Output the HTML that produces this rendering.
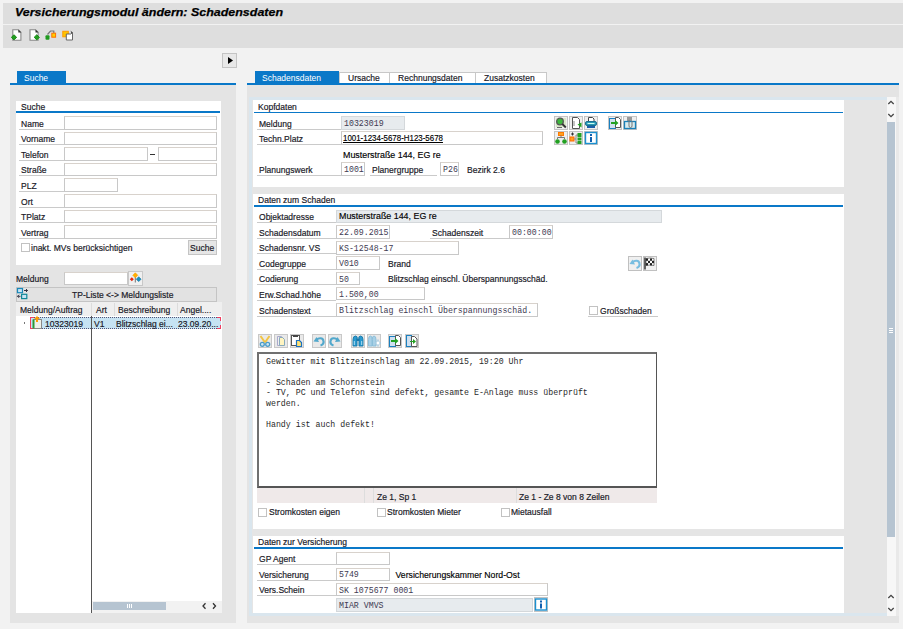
<!DOCTYPE html><html><head><meta charset='utf-8'><style>
*{margin:0;padding:0;box-sizing:border-box}
html,body{width:903px;height:629px;overflow:hidden;background:#f2f2f2;font-family:"Liberation Sans",sans-serif}
body{position:relative}
div{position:absolute}
.t,.t2,.m,.tw,.tt{white-space:nowrap;line-height:12px}
.t{font-size:9.8px;color:#1a1a28;transform:scaleX(.87);transform-origin:0 0;-webkit-text-stroke:0.2px #1a1a28}
.t2{font-size:8.7px;color:#000;-webkit-text-stroke:0.15px #000}
.tw{font-size:9.6px;color:#fff;transform:scaleX(.885);transform-origin:0 0}
.tt{font-size:11.6px;font-weight:bold;font-style:italic;color:#000;transform:scaleX(1.074);transform-origin:0 0;-webkit-text-stroke:0.25px #000}
.m{font-family:"Liberation Mono",monospace;font-size:8.25px;color:#403a52}
.lbl{border-bottom:1px solid #cacaca}
.inp{background:#fff;border:1px solid #c8c8c8;border-top-color:#d8d2cc}
.ro{background:#e7ebee;border-color:#d4d8db}
.cb{width:9px;height:9px;border:1px solid #c2c2c2;background:#fff}
.btn{background:#e6e6e6;border:1px solid #c4c4c4}
.ib{width:14px;height:14px;background:#ececec;border:1px solid #cfcfcf}
</style></head><body><div style="left:3px;top:3px;width:900px;height:21px;background:#dedede"></div>
<div style="left:3px;top:25px;width:900px;height:23px;background:#dedede"></div>
<div class="tt" style="left:15px;top:6px;">Versicherungsmodul ändern: Schadensdaten</div>
<svg style="position:absolute;left:10px;top:28px" width="66" height="14" viewBox="0 0 66 14">
<path d="M2.8 1.7h5.5l2.6 2.6v8h-8.1z" fill="#fff" stroke="#888" stroke-width="1.1"/>
<path d="M8.3 1.5v3h3z" fill="#333"/>
<path d="M4 6.8l2.6 2.5-2.6 2.6-2.6-2.6z" fill="#22a020" stroke="#1a8a18" stroke-width="1"/>
<path d="M20 1.7h5.5l2.6 2.6v8h-8.1z" fill="#fff" stroke="#888" stroke-width="1.1"/>
<path d="M25.5 1.5v3h3z" fill="#333"/>
<path d="M26.8 6.8l2.6 2.5-2.6 2.6-2.6-2.6z" fill="#22a020" stroke="#1a8a18" stroke-width="1"/>
<path d="M37.5 6.5l3-3.5h3.3v2" fill="none" stroke="#777" stroke-width="1.2"/>
<rect x="35.5" y="7.2" width="4" height="4.6" rx="1" fill="#1e9a1e"/>
<rect x="41.8" y="5.2" width="3.8" height="4" fill="#ffd000" stroke="#ff7000" stroke-width="1"/>
<rect x="52.8" y="3.3" width="5.5" height="5.5" fill="#ffc400" stroke="#ff9a00" stroke-width="1"/>
<path d="M56.3 6h4.5l1.7 -1.5v7.5h-6.2z" fill="#fff" stroke="#666" stroke-width="1"/><path d="M60.5 2.5l2 2-1 1z" fill="#333"/>
</svg>
<div style="left:17px;top:71px;width:49px;height:12px;background:#0a78c8"></div>
<div class="tw" style="left:24px;top:72px;">Suche</div>
<div style="left:10px;top:83px;width:226px;height:2px;background:#0a78c8"></div>
<div style="left:10px;top:85px;width:226px;height:538px;background:#e4e4e4"></div>
<div class="btn" style="left:222px;top:53px;width:15px;height:15px;background:#e8e8e8"></div>
<svg style="position:absolute;left:222px;top:53px" width="15" height="15"><path d="M6 4l5 3.5-5 3.5z" fill="#000"/></svg>
<div style="left:16px;top:101px;width:205px;height:164px;background:#fff"></div>
<div class="t" style="left:21px;top:100.5px;">Suche</div>
<div style="left:16px;top:111px;width:204px;height:2px;background:#0a78c8"></div>
<div class="lbl" style="left:19px;top:116.0px;width:45px;height:13.5px"></div>
<div class="t" style="left:21px;top:117.5px;">Name</div>
<div class="inp" style="left:64px;top:116.0px;width:153px;height:13.5px;"></div>
<div class="lbl" style="left:19px;top:131.6px;width:45px;height:13.5px"></div>
<div class="t" style="left:21px;top:133.1px;">Vorname</div>
<div class="inp" style="left:64px;top:131.6px;width:153px;height:13.5px;"></div>
<div class="lbl" style="left:19px;top:147.2px;width:45px;height:13.5px"></div>
<div class="t" style="left:21px;top:148.7px;">Telefon</div>
<div class="inp" style="left:64px;top:147.2px;width:84px;height:13.5px;"></div>
<div class="inp" style="left:158px;top:147.2px;width:59px;height:13.5px;"></div>
<div style="left:150px;top:153.7px;width:5px;height:1px;background:#333"></div>
<div class="lbl" style="left:19px;top:162.8px;width:45px;height:13.5px"></div>
<div class="t" style="left:21px;top:164.3px;">Straße</div>
<div class="inp" style="left:64px;top:162.8px;width:153px;height:13.5px;"></div>
<div class="lbl" style="left:19px;top:178.4px;width:45px;height:13.5px"></div>
<div class="t" style="left:21px;top:179.9px;">PLZ</div>
<div class="inp" style="left:64px;top:178.4px;width:54px;height:13.5px;"></div>
<div class="lbl" style="left:19px;top:194.0px;width:45px;height:13.5px"></div>
<div class="t" style="left:21px;top:195.5px;">Ort</div>
<div class="inp" style="left:64px;top:194.0px;width:153px;height:13.5px;"></div>
<div class="lbl" style="left:19px;top:209.6px;width:45px;height:13.5px"></div>
<div class="t" style="left:21px;top:211.1px;">TPlatz</div>
<div class="inp" style="left:64px;top:209.6px;width:153px;height:13.5px;"></div>
<div class="lbl" style="left:19px;top:225.2px;width:45px;height:13.5px"></div>
<div class="t" style="left:21px;top:226.7px;">Vertrag</div>
<div class="inp" style="left:64px;top:225.2px;width:153px;height:13.5px;"></div>
<div class="cb" style="left:21px;top:243px"></div>
<div class="t" style="left:31px;top:242px;">inakt. MVs berücksichtigen</div>
<div class="btn" style="left:188px;top:240px;width:29px;height:15px"></div>
<div class="t" style="left:190px;top:242px;">Suche</div>
<div class="t" style="left:16px;top:273px;">Meldung</div>
<div class="inp" style="left:64px;top:271.5px;width:64px;height:13.5px;"></div>
<div class="ib" style="left:128px;top:270.5px;width:15px;height:15.5px;background:#f0f0f0;border-color:#c8c8c8"></div>
<svg style="position:absolute;left:128px;top:271px" width="15" height="15">
<path d="M7.3 5v6.5" stroke="#777" stroke-width="1"/>
<path d="M7.3 1.8l2.5 2.5-2.5 2.5-2.5-2.5z" fill="#ffb000" stroke="#ff9a00" stroke-width="0.6"/>
<path d="M3.8 6.3l2 2-2 2-2-2z" fill="#e82a10"/>
<path d="M10.7 5.8l2.4 2.4-2.4 2.4-2.4-2.4z" fill="#1890c0" stroke="#0a70a0" stroke-width="0.6"/>
</svg>
<div class="btn" style="left:16px;top:287px;width:201px;height:15px;background:#e2e2e2"></div>
<svg style="position:absolute;left:16px;top:287px" width="14" height="14">
<rect x="1.5" y="1.5" width="5" height="4.2" fill="#c8e4f4" stroke="#1a88b8" stroke-width="1.2"/>
<rect x="5.6" y="7.3" width="5.2" height="4.3" fill="#c8e4f4" stroke="#108898" stroke-width="1.2"/>
<path d="M8 3.5h3.5M10 2l1.5 1.5L10 5" stroke="#334" fill="none" stroke-width="1"/>
<path d="M4.5 9.3H1.5M3 7.8L1.5 9.3 3 10.8" stroke="#334" fill="none" stroke-width="1"/>
</svg>
<div class="t" style="left:72px;top:289px;">TP-Liste &lt;-&gt; Meldungsliste</div>
<div style="left:16px;top:302px;width:206px;height:311px;background:#fff"></div>
<div style="left:16px;top:302px;width:206px;height:14px;background:#efefef"></div>
<div style="left:91px;top:303px;width:1px;height:13px;background:#dcdcdc"></div>
<div style="left:114px;top:303px;width:1px;height:13px;background:#dcdcdc"></div>
<div style="left:177px;top:303px;width:1px;height:13px;background:#dcdcdc"></div>
<div class="t" style="left:20px;top:303.5px;">Meldung/Auftrag</div>
<div class="t" style="left:96px;top:303.5px;">Art</div>
<div class="t" style="left:118px;top:303.5px;">Beschreibung</div>
<div class="t" style="left:180px;top:303.5px;">Angel....</div>
<div style="left:30px;top:316.5px;width:191px;height:12.5px;background:#c6e3f3;border-top:1px dotted #557;border-bottom:1px dotted #557"></div>
<div style="left:30px;top:316.5px;width:1.2px;height:12.5px;background:#f04060"></div>
<div style="left:30px;top:316.5px;width:4px;height:1.2px;background:#f04060"></div>
<div style="left:30px;top:327.8px;width:4px;height:1.2px;background:#f04060"></div>
<div style="left:220px;top:316.5px;width:1.2px;height:4px;background:#f04060"></div>
<div style="left:220px;top:325px;width:1.2px;height:4px;background:#f04060"></div>
<div style="left:217px;top:316.5px;width:4px;height:1.2px;background:#f04060"></div>
<div style="left:217px;top:327.8px;width:4px;height:1.2px;background:#f04060"></div>
<div style="left:23.5px;top:322px;width:1.5px;height:1.5px;background:#777"></div>
<svg style="position:absolute;left:32px;top:316px" width="11" height="13">
<rect x="1.5" y="3.5" width="8" height="9" fill="#f0f0e8" stroke="#888"/>
<rect x="0.5" y="3.5" width="2" height="9" fill="#2a9a3a"/>
<path d="M5 0l3 3h-2v3h-2v-3h-2z" fill="#ff9a00"/>
</svg>
<div class="t" style="left:45px;top:317.5px;">10323019</div>
<div class="t" style="left:94px;top:317.5px;">V1</div>
<div class="t" style="left:116px;top:317.5px;">Blitzschlag ei...</div>
<div class="t" style="left:178px;top:317.5px;">23.09.20...</div>
<div style="left:91px;top:316px;width:1px;height:297px;background:#555"></div>
<div style="left:92px;top:600.5px;width:130px;height:12px;background:#f2f2f2"></div>
<div style="left:93px;top:602px;width:73px;height:8px;background:#b6c4d1"></div>
<div style="left:127px;top:604px;width:1px;height:4px;background:#fff"></div>
<div style="left:129px;top:604px;width:1px;height:4px;background:#fff"></div>
<div style="left:131px;top:604px;width:1px;height:4px;background:#fff"></div>
<svg style="position:absolute;left:198px;top:600px" width="24" height="12"><path d="M7.5 3.3L5 6l2.5 2.7M15 3.3L17.5 6 15 8.7" fill="none" stroke="#333" stroke-width="1.3"/></svg>
<div style="left:255px;top:71px;width:84px;height:12px;background:#0a78c8"></div>
<div class="tw" style="left:262px;top:72px;">Schadensdaten</div>
<div style="left:339px;top:71.5px;width:208px;height:12px;background:#fff;border:1px solid #c8c8c8;border-bottom:none"></div>
<div style="left:389px;top:72px;width:1px;height:11px;background:#c8c8c8"></div>
<div style="left:475px;top:72px;width:1px;height:11px;background:#c8c8c8"></div>
<div class="t" style="left:348px;top:72px;">Ursache</div>
<div class="t" style="left:398px;top:72px;">Rechnungsdaten</div>
<div class="t" style="left:484px;top:72px;">Zusatzkosten</div>
<div style="left:247px;top:83px;width:652px;height:2px;background:#0a78c8"></div>
<div style="left:247px;top:85px;width:652px;height:538px;background:#e4e4e4"></div>
<div style="left:249px;top:97px;width:638px;height:519px;background:#dae6ee"></div>
<div style="left:252px;top:100px;width:635px;height:512.5px;background:#e5e5e5"></div>
<div style="left:887px;top:97px;width:9px;height:519px;background:#f7f7f7"></div>
<div style="left:896px;top:97px;width:3px;height:519px;background:#e9e9e9"></div>
<div style="left:887px;top:121.7px;width:8px;height:415.5px;background:#b6c4d1"></div>
<div style="left:889px;top:328px;width:4px;height:1px;background:#fff"></div>
<div style="left:889px;top:330px;width:4px;height:1px;background:#fff"></div>
<div style="left:889px;top:332px;width:4px;height:1px;background:#fff"></div>
<svg style="position:absolute;left:886px;top:99px" width="10" height="20"><path d="M2.3 5L5 2.3 7.7 5M2.3 15L5 17.7 7.7 15" fill="none" stroke="#444" stroke-width="1.3"/></svg>
<svg style="position:absolute;left:886px;top:593px" width="10" height="20"><path d="M2.3 5L5 2.3 7.7 5M2.3 15L5 17.7 7.7 15" fill="none" stroke="#444" stroke-width="1.3"/></svg>
<div style="left:252.5px;top:100px;width:591.5px;height:87px;background:#fff"></div>
<div class="t" style="left:258px;top:101px;">Kopfdaten</div>
<div style="left:254px;top:111.5px;width:589px;height:1.5px;background:#0a78c8"></div>
<div class="lbl" style="left:257px;top:116px;width:84px;height:13.5px"></div>
<div class="t" style="left:259px;top:117.5px;">Meldung</div>
<div class="inp ro" style="left:341px;top:116px;width:64px;height:13.5px;"></div>
<div class="m" style="left:344px;top:118.0px;">10323019</div>
<div class="lbl" style="left:257px;top:131px;width:84px;height:14px"></div>
<div class="t" style="left:259px;top:133px;">Techn.Platz</div>
<div class="inp" style="left:341px;top:131px;width:202px;height:14px;"></div>
<div class="t2" style="left:343px;top:132.3px;font-size:9px;transform:scaleX(.88);transform-origin:0 0;text-decoration:underline">1001-1234-5678-H123-5678</div>
<div class="t2" style="left:343px;top:149px;font-size:8.9px">Musterstraße 144, EG re</div>
<div class="lbl" style="left:257px;top:162px;width:84px;height:13.5px"></div>
<div class="t" style="left:259px;top:163.5px;">Planungswerk</div>
<div class="inp" style="left:341px;top:162.3px;width:24px;height:13.5px;"></div>
<div class="m" style="left:344px;top:164.3px;">1001</div>
<div class="lbl" style="left:370px;top:162px;width:67px;height:13.5px"></div>
<div class="t" style="left:372px;top:163.5px;">Planergruppe</div>
<div class="inp" style="left:440px;top:162.3px;width:19px;height:13.5px;"></div>
<div class="m" style="left:443px;top:164.3px;">P26</div>
<div class="t" style="left:467px;top:164px;">Bezirk 2.6</div>
<div style="left:554px;top:116px;width:14px;height:14px;background:#efefef;border:1px solid #c4c4c4"></div>
<svg style="position:absolute;left:554px;top:116px" width="14" height="14" viewBox="0 0 14 14"><rect x="2" y="2" width="10" height="9" fill="#d8e8c8"/><circle cx="6" cy="5.5" r="3.3" fill="#3cb83c" stroke="#555" stroke-width="1.3"/><path d="M8.3 8l3.5 3.5" stroke="#333" stroke-width="1.8"/><path d="M3 11.5h5" stroke="#666"/></svg>
<div style="left:569px;top:116px;width:14px;height:14px;background:#efefef;border:1px solid #c4c4c4"></div>
<svg style="position:absolute;left:569px;top:116px" width="14" height="14" viewBox="0 0 14 14"><path d="M3.5 1.5h5l2 2v9h-7z" fill="#fff" stroke="#555"/><path d="M5 5v5" stroke="#888"/><path d="M8.5 8.5l4-2v5z" fill="#22a022"/></svg>
<div style="left:583.5px;top:116px;width:14px;height:14px;background:#efefef;border:1px solid #c4c4c4"></div>
<svg style="position:absolute;left:583.5px;top:116px" width="14" height="14" viewBox="0 0 14 14"><path d="M4.5 1.5h4l1.5 1.5v3h-5.5z" fill="#fff" stroke="#444"/><rect x="1.5" y="5.5" width="11" height="4" rx="1.5" fill="#2a9ab8" stroke="#1a7090"/><path d="M3.5 7.5h7" stroke="#cfe" stroke-width="1"/><rect x="3" y="10" width="8" height="2" fill="#1a60a8"/></svg>
<div style="left:608px;top:116px;width:14px;height:14px;background:#efefef;border:1px solid #c4c4c4"></div>
<svg style="position:absolute;left:608px;top:116px" width="14" height="14" viewBox="0 0 14 14"><rect x="1.5" y="2.5" width="6" height="10" fill="#cfe0f0" stroke="#1a80c0"/><path d="M7.5 1.5h3l2 2v8h-5z" fill="#fff" stroke="#555"/><path d="M3 6h4v-2l3.5 3-3.5 3v-2h-4z" fill="#22a022"/></svg>
<div style="left:622.5px;top:116px;width:14px;height:14px;background:#efefef;border:1px solid #c4c4c4"></div>
<svg style="position:absolute;left:622.5px;top:116px" width="14" height="14" viewBox="0 0 14 14"><rect x="4" y="1" width="5" height="5" fill="#999"/><rect x="1.5" y="5.5" width="11" height="7" fill="#d8ecf0" stroke="#1a80b8" stroke-width="1.3"/><path d="M6 4v6a1.5 1.5 0 0 0 3 0v-5" fill="none" stroke="#777"/></svg>
<div style="left:554px;top:131px;width:14px;height:14px;background:#efefef;border:1px solid #c4c4c4"></div>
<svg style="position:absolute;left:554px;top:131px" width="14" height="14" viewBox="0 0 14 14"><rect x="4.5" y="1.5" width="5" height="3" fill="#ffa020" stroke="#ff7a00"/><path d="M7 4.5v2M3.5 8v-1.5h7v1.5" stroke="#777" fill="none"/><circle cx="3.5" cy="10.5" r="2.3" fill="#22a022"/><circle cx="10.5" cy="10.5" r="2.3" fill="#22a022"/></svg>
<div style="left:569px;top:131px;width:14px;height:14px;background:#efefef;border:1px solid #c4c4c4"></div>
<svg style="position:absolute;left:569px;top:131px" width="14" height="14" viewBox="0 0 14 14"><path d="M2 3h3M3.5 1.5v3" stroke="#333"/><rect x="1" y="6" width="4" height="4" fill="#ffa020" stroke="#ff6a00"/><path d="M5 8h2M7 4v8M7 4h2M7 12h2" stroke="#888" fill="none"/><rect x="8.5" y="2" width="4" height="4" fill="#22a022"/><rect x="8.5" y="6.5" width="4" height="3" fill="#22a022"/><rect x="8.5" y="10" width="4" height="3" fill="#22a022"/></svg>
<div style="left:583.5px;top:131px;width:14px;height:14px;background:#efefef;border:1px solid #c4c4c4"></div>
<svg style="position:absolute;left:583.5px;top:131px" width="14" height="14" viewBox="0 0 14 14"><rect x="1.5" y="1.5" width="11" height="11" fill="#fff" stroke="#1a90d0" stroke-width="1.4"/><rect x="6" y="3" width="2" height="2" fill="#1060b0"/><rect x="6" y="6" width="2" height="5" fill="#1060b0"/></svg>
<div style="left:253px;top:193.5px;width:591px;height:335.5px;background:#fff"></div>
<div class="t" style="left:258px;top:193.5px;">Daten zum Schaden</div>
<div style="left:254px;top:205px;width:589px;height:1.5px;background:#0a78c8"></div>
<div class="lbl" style="left:257px;top:209.5px;width:79px;height:13.5px"></div>
<div class="t" style="left:259px;top:211.0px;">Objektadresse</div>
<div class="inp ro" style="left:336px;top:209.5px;width:326px;height:13px;"></div>
<div class="t2" style="left:339px;top:210px;font-size:8.9px">Musterstraße 144, EG re</div>
<div class="lbl" style="left:257px;top:225px;width:79px;height:13.5px"></div>
<div class="t" style="left:259px;top:226.5px;">Schadensdatum</div>
<div class="inp" style="left:336px;top:225px;width:54px;height:13.8px;"></div>
<div class="m" style="left:339px;top:227.3px;">22.09.2015</div>
<div class="lbl" style="left:430px;top:225px;width:79px;height:13.5px"></div>
<div class="t" style="left:432px;top:226.5px;">Schadenszeit</div>
<div class="inp" style="left:509px;top:225px;width:44px;height:13.5px;"></div>
<div class="m" style="left:512px;top:227.0px;">00:00:00</div>
<div class="lbl" style="left:257px;top:240.5px;width:79px;height:13.5px"></div>
<div class="t" style="left:259px;top:242.0px;">Schadensnr. VS</div>
<div class="inp" style="left:336px;top:240.5px;width:123px;height:14px;"></div>
<div class="m" style="left:339px;top:243.0px;">KS-12548-17</div>
<div class="lbl" style="left:257px;top:256px;width:79px;height:13.5px"></div>
<div class="t" style="left:259px;top:257.5px;">Codegruppe</div>
<div class="inp" style="left:336px;top:256px;width:44px;height:13.5px;"></div>
<div class="m" style="left:339px;top:258.0px;">V010</div>
<div class="t" style="left:388px;top:257.5px;">Brand</div>
<div style="left:628px;top:255.5px;width:14px;height:15px;background:#f0f0f0;border:1px solid #c0c0c0"></div>
<svg style="position:absolute;left:628px;top:255.5px" width="14" height="15" viewBox="0 0 14 14"><path d="M4.5 6C6.5 3.5 11 3.5 11.5 7C12 9.5 10 11 8.5 11.5" stroke="#78bde0" stroke-width="2.2" fill="none"/><path d="M1.5 7.5L4.5 3 7 8z" fill="#78bde0"/></svg>
<div style="left:643px;top:255.5px;width:14px;height:15px;background:#f0f0f0;border:1px solid #c0c0c0"></div>
<svg style="position:absolute;left:643px;top:255.5px" width="14" height="15" viewBox="0 0 14 14"><path d="M2 1v12" stroke="#333" stroke-width="1.5"/><path d="M3 2q4-1 8 0v7q-4 -1 -8 0z" fill="#fff" stroke="#333" stroke-width="0.6"/><rect x="3" y="2" width="2" height="2.3" fill="#222"/><rect x="7" y="2" width="2" height="2.3" fill="#222"/><rect x="5" y="4.3" width="2" height="2.3" fill="#222"/><rect x="9" y="4.3" width="2" height="2.3" fill="#222"/><rect x="3" y="6.6" width="2" height="2.3" fill="#222"/><rect x="7" y="6.6" width="2" height="2.3" fill="#222"/></svg>
<div class="lbl" style="left:257px;top:271.5px;width:79px;height:13.5px"></div>
<div class="t" style="left:259px;top:273.0px;">Codierung</div>
<div class="inp" style="left:336px;top:271.7px;width:24px;height:13.5px;"></div>
<div class="m" style="left:339px;top:273.7px;">50</div>
<div class="t" style="left:388px;top:273px;">Blitzschlag einschl. Überspannungsschäd.</div>
<div class="lbl" style="left:257px;top:287px;width:79px;height:13.5px"></div>
<div class="t" style="left:259px;top:288.5px;">Erw.Schad.höhe</div>
<div class="inp" style="left:336px;top:287.3px;width:89px;height:13.2px;"></div>
<div class="m" style="left:339px;top:289.0px;">1.500,00</div>
<div class="lbl" style="left:257px;top:302.5px;width:79px;height:14px"></div>
<div class="t" style="left:259px;top:304.5px;">Schadenstext</div>
<div class="inp" style="left:336px;top:302.6px;width:202px;height:14px;"></div>
<div class="m" style="left:339px;top:305.1px;">Blitzschlag einschl Überspannungsschäd.</div>
<div class="cb" style="left:589px;top:305.5px"></div>
<div class="t" style="left:600px;top:304.5px;">Großschaden</div>
<div style="left:588px;top:315.5px;width:70px;height:1px;background:#cacaca"></div>
<div style="left:258px;top:334px;width:14px;height:14px;background:#e9e9e9;border:1px solid #c8c8c8"></div>
<svg style="position:absolute;left:258px;top:334px" width="14" height="14" viewBox="0 0 14 14"><path d="M2.5 2l4.5 6.5M11.5 2l-4.5 6.5" stroke="#f2c444" stroke-width="2"/><circle cx="4.3" cy="10.3" r="2" fill="#cfe6f0" stroke="#4a9cc8" stroke-width="1.3"/><circle cx="9.7" cy="10.3" r="2" fill="#cfe6f0" stroke="#4a9cc8" stroke-width="1.3"/></svg>
<div style="left:274.3px;top:334px;width:14px;height:14px;background:#e9e9e9;border:1px solid #c8c8c8"></div>
<svg style="position:absolute;left:274.3px;top:334px" width="14" height="14" viewBox="0 0 14 14"><path d="M3.5 2.5h4l2 2v7h-6z" fill="#f0f0f0" stroke="#aac"/><path d="M5.5 3.5h3l2 2v6h-5z" fill="#fff4c0" stroke="#8ab"/></svg>
<div style="left:290.4px;top:334px;width:14px;height:14px;background:#e9e9e9;border:1px solid #c8c8c8"></div>
<svg style="position:absolute;left:290.4px;top:334px" width="14" height="14" viewBox="0 0 14 14"><rect x="1.5" y="1.5" width="8" height="10" fill="#fff" stroke="#555"/><rect x="3" y="1" width="5" height="2" fill="#444"/><path d="M6.5 6.5h3l2 2v4h-5z" fill="#ffe070" stroke="#1a70c0" stroke-width="1.2"/></svg>
<div style="left:312.3px;top:334px;width:14px;height:14px;background:#e9e9e9;border:1px solid #c8c8c8"></div>
<svg style="position:absolute;left:312.3px;top:334px" width="14" height="14" viewBox="0 0 14 14"><path d="M4.5 6C6.5 3.5 11 3.5 11.5 7C12 9.5 10 11 8.5 11.5" stroke="#52a8cc" stroke-width="2.2" fill="none"/><path d="M1.5 7.5L4.5 3 7 8z" fill="#52a8cc"/></svg>
<div style="left:328.3px;top:334px;width:14px;height:14px;background:#e9e9e9;border:1px solid #c8c8c8"></div>
<svg style="position:absolute;left:328.3px;top:334px" width="14" height="14" viewBox="0 0 14 14"><path d="M9.5 6C7.5 3.5 3 3.5 2.5 7C2 9.5 4 11 5.5 11.5" stroke="#52a8cc" stroke-width="2.2" fill="none"/><path d="M12.5 7.5L9.5 3 7 8z" fill="#52a8cc"/></svg>
<div style="left:350.7px;top:334px;width:14px;height:14px;background:#e9e9e9;border:1px solid #c8c8c8"></div>
<svg style="position:absolute;left:350.7px;top:334px" width="14" height="14" viewBox="0 0 14 14"><path d="M2 12V5.5Q2 2 4.5 2T6 5.5V12z" fill="#2a9ad0" stroke="#1a78a8" stroke-width="0.9"/><path d="M12 12V5.5Q12 2 9.5 2T8 5.5V12z" fill="#2a9ad0" stroke="#1a78a8" stroke-width="0.9"/><rect x="5.5" y="4.5" width="3" height="2.5" fill="#1a78a8"/><path d="M3.3 7v4M10.7 7v4" stroke="#bfe4f4" stroke-width="0.9"/></svg>
<div style="left:367px;top:334px;width:14px;height:14px;background:#e9e9e9;border:1px solid #c8c8c8"></div>
<svg style="position:absolute;left:367px;top:334px" width="14" height="14" viewBox="0 0 14 14"><path d="M1.5 12V5.5Q1.5 2 3.5 2T5 5.5V12z" fill="#a8d0e6" stroke="#88bcd8" stroke-width="0.9"/><path d="M9 12V5.5Q9 2 7 2T5.5 5.5V12z" fill="#a8d0e6" stroke="#88bcd8" stroke-width="0.9"/><path d="M11 5.5l1 2.5 2 1-2 1-1 2.5-1-2.5-2-1 2-1z" fill="#fff" stroke="#9cc4dc" stroke-width="0.7"/></svg>
<div style="left:388.3px;top:334px;width:14px;height:14px;background:#e9e9e9;border:1px solid #c8c8c8"></div>
<svg style="position:absolute;left:388.3px;top:334px" width="14" height="14" viewBox="0 0 14 14"><rect x="1.5" y="2.5" width="6" height="10" fill="#cfe0f0" stroke="#1a80c0"/><path d="M7.5 1.5h3l2 2v8h-5z" fill="#fff" stroke="#555"/><path d="M3 6h4v-2l3.5 3-3.5 3v-2h-4z" fill="#22a022"/></svg>
<div style="left:405.2px;top:334px;width:14px;height:14px;background:#e9e9e9;border:1px solid #c8c8c8"></div>
<svg style="position:absolute;left:405.2px;top:334px" width="14" height="14" viewBox="0 0 14 14"><rect x="1.5" y="1.5" width="5" height="11" fill="#cfe0f0" stroke="#1a80c0"/><path d="M6.5 2.5h3l2.5 2.5v7.5h-5.5z" fill="#fff" stroke="#555"/><path d="M5 7h3v-2l3 2.5-3 2.5v-2h-3z" fill="#22a022"/></svg>
<div style="left:257px;top:352px;width:400px;height:135.5px;background:#fff;border:2px solid #707070;border-right:1.5px solid #555;border-bottom:2px solid #555"></div>
<div class="m" style="left:266px;top:355.5px;color:#2a2a2a">Gewitter mit Blitzeinschlag am 22.09.2015, 19:20 Uhr</div>
<div class="m" style="left:266px;top:376.76px;color:#2a2a2a">- Schaden am Schornstein</div>
<div class="m" style="left:266px;top:387.39px;color:#2a2a2a">- TV, PC und Telefon sind defekt, gesamte E-Anlage muss überprüft</div>
<div class="m" style="left:266px;top:398.02px;color:#2a2a2a">werden.</div>
<div class="m" style="left:266px;top:419.28px;color:#2a2a2a">Handy ist auch defekt!</div>
<div style="left:257px;top:487.5px;width:400px;height:15.5px;background:#efe9e9"></div>
<div style="left:364px;top:487.5px;width:1px;height:15.5px;background:#ddd"></div>
<div style="left:373px;top:487.5px;width:1px;height:15.5px;background:#ddd"></div>
<div style="left:516px;top:487.5px;width:1px;height:15.5px;background:#ddd"></div>
<div class="t" style="left:377px;top:490.5px;">Ze 1, Sp 1</div>
<div class="t" style="left:519px;top:490.5px;">Ze 1 - Ze 8 von 8 Zeilen</div>
<div class="cb" style="left:258px;top:507.5px"></div>
<div class="t" style="left:268.5px;top:506px;">Stromkosten eigen</div>
<div class="cb" style="left:376.5px;top:507.5px"></div>
<div class="t" style="left:387px;top:506px;">Stromkosten Mieter</div>
<div class="cb" style="left:500.5px;top:507.5px"></div>
<div class="t" style="left:510.5px;top:506px;">Mietausfall</div>
<div style="left:253px;top:536px;width:591px;height:77px;background:#fff"></div>
<div class="t" style="left:258px;top:535.5px;">Daten zur Versicherung</div>
<div style="left:254px;top:546.5px;width:589px;height:2px;background:#0a78c8"></div>
<div class="lbl" style="left:257px;top:551.5px;width:79px;height:13.5px"></div>
<div class="t" style="left:259px;top:553.0px;">GP Agent</div>
<div class="inp" style="left:336px;top:551.5px;width:54px;height:13px;"></div>
<div class="lbl" style="left:257px;top:567px;width:79px;height:13.5px"></div>
<div class="t" style="left:259px;top:568.5px;">Versicherung</div>
<div class="inp" style="left:336px;top:567.5px;width:54px;height:13px;"></div>
<div class="m" style="left:339px;top:569.0px;">5749</div>
<div class="t2" style="left:395.5px;top:569px;font-size:8.7px">Versicherungskammer Nord-Ost</div>
<div class="lbl" style="left:257px;top:582.5px;width:79px;height:13.5px"></div>
<div class="t" style="left:259px;top:584.0px;">Vers.Schein</div>
<div class="inp" style="left:336px;top:583px;width:212px;height:13px;"></div>
<div class="m" style="left:339px;top:584.5px;">SK 1075677 0001</div>
<div class="inp ro" style="left:336px;top:598px;width:197px;height:13.5px;"></div>
<div class="m" style="left:339px;top:600.0px;">MIAR VMVS</div>
<div style="left:534px;top:597px;width:14px;height:15px;background:#efefef;border:1px solid #c4c4c4"></div>
<svg style="position:absolute;left:534px;top:597px" width="14" height="15" viewBox="0 0 14 14"><rect x="1.5" y="1.5" width="11" height="11" fill="#fff" stroke="#1a90d0" stroke-width="1.4"/><rect x="6" y="3" width="2" height="2" fill="#1060b0"/><rect x="6" y="6" width="2" height="5" fill="#1060b0"/></svg></body></html>
